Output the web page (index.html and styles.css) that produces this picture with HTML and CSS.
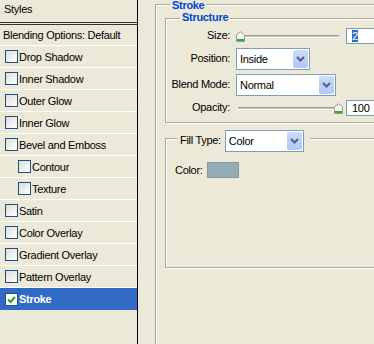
FILE: index.html
```html
<!DOCTYPE html>
<html lang="en">
<head>
    <meta charset="UTF-8">
    <title>Layer Style - Stroke</title>
    <link rel="stylesheet" href="styles.css">
</head>
<body>
    <div class="dialog">
        <aside class="styles-panel">
            <div class="panel-title">Styles</div>
            <div class="style-row plain">Blending Options: Default</div>
            <div class="style-row"><span class="check"></span>Drop Shadow</div>
            <div class="style-row"><span class="check"></span>Inner Shadow</div>
            <div class="style-row"><span class="check"></span>Outer Glow</div>
            <div class="style-row"><span class="check"></span>Inner Glow</div>
            <div class="style-row"><span class="check"></span>Bevel and Emboss</div>
            <div class="style-row sub"><span class="check"></span>Contour</div>
            <div class="style-row sub"><span class="check"></span>Texture</div>
            <div class="style-row"><span class="check"></span>Satin</div>
            <div class="style-row"><span class="check"></span>Color Overlay</div>
            <div class="style-row"><span class="check"></span>Gradient Overlay</div>
            <div class="style-row"><span class="check"></span>Pattern Overlay</div>
            <div class="style-row selected">
                <span class="check checked">
                    <svg width="11" height="11" viewBox="0 0 11 11"><path d="M2 5.5L4.5 8L9 3" fill="none" stroke="#21a121" stroke-width="2"/></svg>
                </span>Stroke
            </div>
        </aside>

        <section class="options">
            <div class="group outer">
                <div class="group-title">Stroke</div>

                <div class="group structure">
                    <div class="group-title">Structure</div>
                    <div class="form-grid">
                        <label>Size:</label>
                        <div class="control-line">
                            <div class="slider size-slider">
                                <svg class="thumb" width="9" height="11" viewBox="0 0 9 11"><path d="M0.5 10.5V3.8L4.5 0.7L8.5 3.8V10.5Z" fill="#f7f7f3" stroke="#9a998e"/><rect x="1" y="8" width="7" height="2" fill="#2fae2f"/></svg>
                                <span class="track"></span>
                            </div>
                            <div class="field size-field"><span class="sel">2</span></div>
                        </div>

                        <label>Position:</label>
                        <div class="combo pos-combo">
                            <span class="combo-text">Inside</span>
                            <span class="combo-btn"><svg width="9" height="6" viewBox="0 0 9 6"><path d="M1 1L4.5 4.5L8 1" fill="none" stroke="#4d6185" stroke-width="2"/></svg></span>
                        </div>

                        <label>Blend Mode:</label>
                        <div class="combo blend-combo">
                            <span class="combo-text">Normal</span>
                            <span class="combo-btn"><svg width="9" height="6" viewBox="0 0 9 6"><path d="M1 1L4.5 4.5L8 1" fill="none" stroke="#4d6185" stroke-width="2"/></svg></span>
                        </div>

                        <label>Opacity:</label>
                        <div class="control-line">
                            <div class="slider opacity-slider">
                                <span class="track"></span>
                                <svg class="thumb" width="9" height="11" viewBox="0 0 9 11"><path d="M0.5 10.5V3.8L4.5 0.7L8.5 3.8V10.5Z" fill="#f7f7f3" stroke="#9a998e"/><rect x="1" y="8" width="7" height="2" fill="#2fae2f"/></svg>
                            </div>
                            <div class="field opacity-field">100</div>
                        </div>
                    </div>
                </div>

                <div class="group fill">
                    <div class="fill-head">
                        <span class="fill-label">Fill Type:</span>
                        <div class="combo fill-combo">
                            <span class="combo-text">Color</span>
                            <span class="combo-btn"><svg width="9" height="6" viewBox="0 0 9 6"><path d="M1 1L4.5 4.5L8 1" fill="none" stroke="#4d6185" stroke-width="2"/></svg></span>
                        </div>
                    </div>
                    <div class="color-row">
                        <span>Color:</span>
                        <span class="swatch"></span>
                    </div>
                </div>
            </div>
        </section>
    </div>
</body>
</html>
```

FILE: styles.css
```css
* {
    margin: 0;
    padding: 0;
    box-sizing: border-box;
}

body {
    width: 374px;
    height: 344px;
    overflow: hidden;
    background-color: #ece9d8; /* XP dialog beige */
    color: #000;
    font-family: "Liberation Sans", Arial, sans-serif;
    font-size: 11px;
    letter-spacing: -0.3px;
}

.dialog {
    display: flex;
    height: 344px;
}

/* Left list of styles */
.styles-panel {
    width: 138px;
    flex: none;
    border-right: 1px solid #000;
}

.panel-title {
    height: 25px;
    padding-left: 4px;
    line-height: 18px;
    border-bottom: 3px double #333;
}

.style-row {
    height: 22px;
    display: flex;
    align-items: center;
    gap: 1px;
    padding-left: 5px;
    border-bottom: 1px solid #fff;
    white-space: nowrap;
}

.style-row.plain {
    height: 21px;
    padding-left: 3px;
}

.style-row.sub {
    padding-left: 18px;
}

.style-row.selected {
    background-color: #316ac5;
    color: #fff;
    font-weight: bold;
    border-bottom: none;
}

.check {
    width: 13px;
    height: 13px;
    flex: none;
    border: 1px solid #1c5180;
    background: linear-gradient(135deg, #dcdcd7, #fff);
    display: flex;
}

.check.checked {
    background: #fff;
}

/* Right option area */
.options {
    flex: 1;
    padding: 4px 0 0 17px;
    overflow: hidden;
}

.group {
    border: 1px solid #aca899;
    box-shadow: inset 1px 1px 0 #fff, 1px 1px 0 #fff;
    display: flex;
    flex-direction: column;
    align-items: flex-start;
}

.group-title {
    color: #0046d5;
    font-weight: bold;
    line-height: 13px;
    padding: 0 2px;
    background-color: #ece9d8;
}

.outer {
    width: 260px;
    height: 400px;
}

.outer > .group-title {
    margin: -6px 0 0 14px;
}

.structure {
    width: 240px;
    margin: 6px 0 0 9px;
}

.structure > .group-title {
    margin: -8px 0 0 14px;
}

.form-grid {
    display: grid;
    grid-template-columns: 64px 1fr;
    column-gap: 6px;
    row-gap: 4px;
    align-items: center;
    padding: 4px 0 6px;
    width: 100%;
}

.form-grid label {
    text-align: right;
    white-space: nowrap;
    padding-bottom: 3px;
}

.control-line {
    display: flex;
    align-items: center;
    height: 16px;
}

.slider {
    display: flex;
    align-items: center;
    flex: none;
}

.size-slider {
    width: 103px;
}

.opacity-slider {
    width: 107px;
}

.thumb {
    flex: none;
    display: block;
}

.track {
    flex: 1;
    height: 3px;
    background-color: #cbc8b8;
    border-top: 1px solid #9c9b8f;
    border-bottom: 1px solid #fff;
}

.opacity-slider .track {
    margin-left: 2px;
}

.field {
    width: 40px;
    height: 16px;
    flex: none;
    border: 1px solid #7f9db9;
    background-color: #fff;
    padding-left: 5px;
    line-height: 14px;
}

.size-field {
    margin-left: 7px;
}

.opacity-field {
    margin-left: 3px;
}

.sel {
    background-color: #316ac5;
    color: #fff;
}

.combo {
    height: 22px;
    display: flex;
    align-items: center;
    border: 1px solid #7f9db9;
    background-color: #fff;
    padding-left: 3px;
}

.combo-text {
    flex: 1;
}

.combo-btn {
    width: 15px;
    height: 18px;
    margin-right: 1px;
    display: flex;
    align-items: center;
    justify-content: center;
    border-radius: 2px;
    background: linear-gradient(#cddbfc, #b3c8f5);
}

.pos-combo {
    width: 74px;
}

.blend-combo {
    width: 100px;
}

.fill-combo {
    width: 79px;
}

/* Fill type box */
.fill {
    width: 240px;
    height: 130px;
    margin: 15px 0 0 9px;
}

.fill-head {
    display: flex;
    align-items: center;
    gap: 4px;
    margin: -9px 0 0 11px;
    padding: 0 6px 0 3px;
    background-color: #ece9d8;
}

.fill-label {
    padding-bottom: 3px;
}

.color-row {
    display: flex;
    align-items: center;
    gap: 4px;
    margin: 10px 0 0 9px;
}

.swatch {
    width: 32px;
    height: 16px;
    background-color: #94aab4;
    border: 1px solid #84979f;
}
```
